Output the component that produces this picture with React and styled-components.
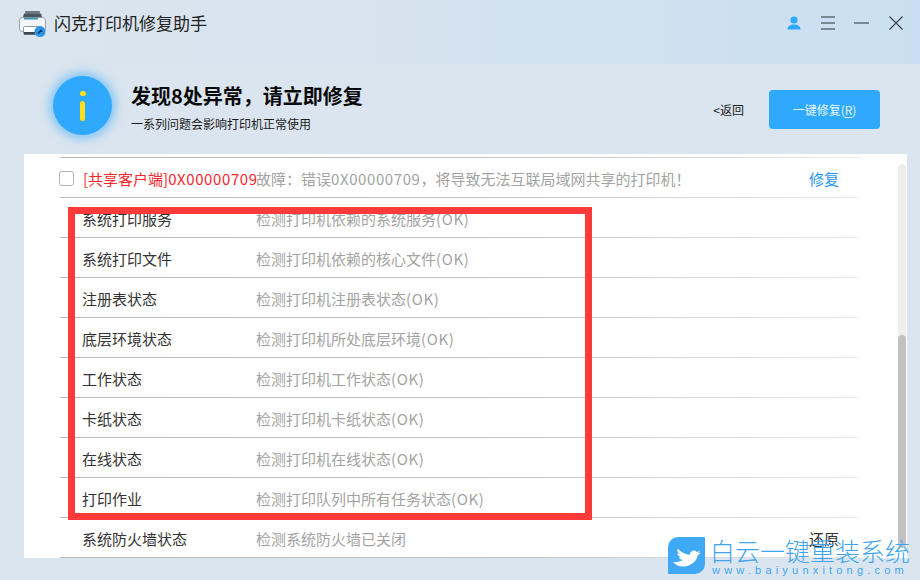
import React from 'react';
import styled, { createGlobalStyle } from 'styled-components';

const CJK = `"Noto Sans CJK SC", "Liberation Sans", sans-serif`;

const GlobalStyle = createGlobalStyle`
    html, body {
        margin: 0;
        padding: 0;
        background: #dbe5ef;
    }
    * {
        box-sizing: border-box;
    }
`;

const Window = styled.div`
    position: relative;
    width: 920px;
    height: 580px;
    overflow: hidden;
    background: #dbe5ef;
    font-family: ${CJK};
    display: flex;
    flex-direction: column;
`;

const TitleBar = styled.div`
    height: 64px;
    flex: none;
    display: flex;
    align-items: flex-start;
    padding: 10px 7px 0 19px;
    background: linear-gradient(90deg, #dbe5ef 0%, #d6e3ef 45%, #c9dff1 100%);
`;

const AppTitle = styled.span`
    margin-left: 8px;
    font-size: 17px;
    line-height: 26px;
    color: #222;
`;

const Controls = styled.div`
    margin-left: auto;
    display: flex;
`;

const ControlButton = styled.div`
    width: 34px;
    height: 26px;
    display: flex;
    align-items: center;
    justify-content: center;
`;

const Summary = styled.div`
    height: 90px;
    flex: none;
    display: flex;
    align-items: center;
    padding: 0 40px 8px 53px;
`;

const InfoBadge = styled.div`
    width: 59px;
    height: 59px;
    flex: none;
    border-radius: 50%;
    background: #2fa9fd;
    box-shadow: 0 0 10px 4px rgba(47, 169, 253, 0.5);
    display: flex;
    flex-direction: column;
    align-items: center;
    padding-top: 15px;
`;

const BadgeDot = styled.span`
    width: 6px;
    height: 5px;
    border-radius: 3px;
    background: #ffdf17;
`;

const BadgeStem = styled.span`
    width: 5px;
    height: 20px;
    margin-top: 5px;
    border-radius: 3px;
    background: #ffdf17;
`;

const SummaryText = styled.div`
    margin-left: 19px;
    margin-top: 5px;
    display: flex;
    flex-direction: column;
`;

const Heading = styled.div`
    font-size: 20px;
    line-height: 28px;
    font-weight: 700;
    color: #0a0a0a;
`;

const SubHeading = styled.div`
    margin-top: 5px;
    font-size: 12px;
    line-height: 18px;
    color: #1a1a1a;
`;

const BackLink = styled.span`
    margin-left: auto;
    margin-top: 8px;
    font-size: 12px;
    color: #1a1a1a;
`;

const RepairAllButton = styled.div`
    width: 111px;
    height: 39px;
    margin-left: 25px;
    margin-top: 9px;
    border-radius: 4px;
    background: #2fa9fd;
    color: #e8f5ff;
    font-size: 12px;
    display: flex;
    align-items: center;
    justify-content: center;
    u {
        text-underline-offset: 2px;
    }
`;

const Panel = styled.div`
    width: 883px;
    height: 404px;
    margin-left: 24px;
    flex: none;
    background: #fff;
    display: flex;
    padding-left: 36px;
    overflow: hidden;
`;

const List = styled.div`
    width: 800px;
    flex: none;
    padding-top: 3px;
`;

const divider = `linear-gradient(90deg, #b8b8b8 0%, #c4c4c4 60%, #ececec 100%)`;

const Row = styled.div`
    height: ${(p) => (p.$first ? '41px' : '40px')};
    padding-top: ${(p) => (p.$first ? '1px' : '0')};
    display: flex;
    align-items: center;
    padding-left: ${(p) => (p.$issue ? '0' : '22px')};
    padding-right: 21px;
    font-size: 15px;
    position: relative;
    background: ${(p) => (p.$first ? `${divider} top / 100% 1px no-repeat` : 'none')};
    &::after {
        content: '';
        position: absolute;
        left: 0;
        right: 0;
        bottom: 0;
        height: 1px;
        background: ${divider};
    }
`;

const CheckBox = styled.span`
    width: 15px;
    height: 15px;
    flex: none;
    margin-left: -1px;
    margin-right: 9px;
    border: 1px solid #b4b4b4;
    border-radius: 3px;
    background: #fff;
`;

const Label = styled.span`
    width: 174px;
    flex: none;
    color: #333;
    white-space: nowrap;
`;

const IssueLabel = styled.span`
    width: 173px;
    flex: none;
    color: #f6262c;
    white-space: nowrap;
`;

const Description = styled.span`
    color: #a3a3a3;
    white-space: nowrap;
`;

// latin runs are a little wider in the original font
const Latin = styled.span`
    letter-spacing: 0.6px;
`;

const RowAction = styled.span`
    margin-left: auto;
    color: ${(p) => (p.$primary ? '#1f95f5' : '#333')};
`;

const ScrollTrack = styled.div`
    width: 8px;
    height: 384px;
    margin: 10px 0 0 38px;
    flex: none;
    border-radius: 4px;
    background: #eeeeee;
    display: flex;
    flex-direction: column;
    justify-content: flex-end;
`;

const ScrollThumb = styled.div`
    height: 213px;
    border-radius: 4px;
    background: #c2c2c2;
`;

// red box drawn over the screenshot
const Highlight = styled.div`
    position: absolute;
    left: 68px;
    top: 207px;
    width: 524px;
    height: 313px;
    border: 7px solid #fc3a3a;
    pointer-events: none;
`;

const Watermark = styled.div`
    position: absolute;
    left: 668px;
    top: 537px;
    display: flex;
    align-items: flex-start;
`;

const WatermarkLogo = styled.div`
    width: 37px;
    height: 37px;
    border-radius: 10px 1px 10px 1px;
    background: #3fa9f5;
    display: flex;
    align-items: center;
    justify-content: center;
    padding-top: 3px;
`;

const WatermarkText = styled.div`
    margin-left: 5px;
    display: flex;
    flex-direction: column;
    color: #3fa5ef;
`;

const WatermarkName = styled.span`
    font-size: 25px;
    line-height: 27px;
    font-weight: 300;
    white-space: nowrap;
`;

const WatermarkUrl = styled.span`
    margin-left: 2px;
    font-family: "Liberation Sans", sans-serif;
    font-size: 11px;
    line-height: 12px;
    letter-spacing: 4.2px;
    white-space: nowrap;
`;

const PrinterIcon = () => (
    <svg width="27" height="27" viewBox="0 0 27 27">
        <path d="M5 3.500h17l1.500 5h-20z" fill="#4b5560" />
        <rect x="6" y="1" width="15" height="3" rx="1" fill="#6d7780" />
        <rect x="0.500" y="7.500" width="26" height="14" rx="3" fill="#f4f6f8" stroke="#98a2ac" />
        <rect x="5" y="7.500" width="14" height="2" fill="#3f8fb0" />
        <rect x="4.500" y="16.500" width="18" height="8" rx="1" fill="#fff" stroke="#8d97a1" />
        <rect x="5" y="22" width="15" height="2.500" fill="#3c4650" />
        <circle cx="21" cy="21.500" r="5.500" fill="#2b95ea" />
        <path d="M19 23.500l3.500-3.500M22.500 19.500v2.500" stroke="#12375a" strokeWidth="1.600" fill="none" />
    </svg>
);

const UserIcon = () => (
    <svg width="14" height="14" viewBox="0 0 14 14">
        <circle cx="7" cy="4" r="3.600" fill="#2fa9fd" />
        <path d="M0.500 13.500c0-3.400 2.600-5 6.500-5s6.500 1.600 6.500 5z" fill="#2fa9fd" />
    </svg>
);

const MenuIcon = () => (
    <svg width="14" height="14" viewBox="0 0 14 14">
        <path d="M0 1h14M0 7h14M0 13h14" stroke="#2b2f33" strokeWidth="1" />
    </svg>
);

const MinimizeIcon = () => (
    <svg width="16" height="14" viewBox="0 0 16 14">
        <path d="M0 7h15" stroke="#2b2f33" strokeWidth="1" />
    </svg>
);

const CloseIcon = () => (
    <svg width="14" height="14" viewBox="0 0 14 14">
        <path d="M0.500 0.500l13 13M13.500 0.500l-13 13" stroke="#3a3e42" strokeWidth="1.100" />
    </svg>
);

const BirdIcon = () => (
    <svg width="28" height="19" viewBox="0 0 28 19">
        <path
            d="M28 4.800l-3 .5 2.200-2.300-3.200.9C22.800 2.700 21.200 2.300 19.800 2.700c-2 .6-3 2.200-2.900 4.100C12.500 6.700 8 4.300 4.500 0.500c-.5 2.200.2 4 2 5.400L4.200 5.600c.5 1.900 1.800 3.100 3.900 3.600l-2.300.2c1 1.500 2.400 2.300 4.300 2.400C7.800 13.500 4.400 14.600 0 14.300c3.200 3 7.200 4.700 11.800 4.200 7.200-.8 12.400-6 12.900-11.400 1.400-.3 2.500-1 3.300-2.300z"
            fill="#fff"
        />
    </svg>
);

const checks = [
    ['系统打印服务', '检测打印机依赖的系统服务'],
    ['系统打印文件', '检测打印机依赖的核心文件'],
    ['注册表状态', '检测打印机注册表状态'],
    ['底层环境状态', '检测打印机所处底层环境'],
    ['工作状态', '检测打印机工作状态'],
    ['卡纸状态', '检测打印机卡纸状态'],
    ['在线状态', '检测打印机在线状态'],
    ['打印作业', '检测打印队列中所有任务状态'],
];

const App = () => {
    return (
        <Window>
            <GlobalStyle />
            <TitleBar>
                <PrinterIcon />
                <AppTitle>闪克打印机修复助手</AppTitle>
                <Controls>
                    <ControlButton><UserIcon /></ControlButton>
                    <ControlButton><MenuIcon /></ControlButton>
                    <ControlButton><MinimizeIcon /></ControlButton>
                    <ControlButton><CloseIcon /></ControlButton>
                </Controls>
            </TitleBar>

            <Summary>
                <InfoBadge>
                    <BadgeDot />
                    <BadgeStem />
                </InfoBadge>
                <SummaryText>
                    <Heading>发现8处异常，请立即修复</Heading>
                    <SubHeading>一系列问题会影响打印机正常使用</SubHeading>
                </SummaryText>
                <BackLink>&lt;返回</BackLink>
                <RepairAllButton>一键修复(<u>R</u>)</RepairAllButton>
            </Summary>

            <Panel>
                <List>
                    <Row $issue $first>
                        <CheckBox />
                        <IssueLabel>[共享客户端]<Latin>0X00000709</Latin></IssueLabel>
                        <Description>故障：错误<Latin>0X00000709</Latin>，将导致无法互联局域网共享的打印机！</Description>
                        <RowAction $primary>修复</RowAction>
                    </Row>
                    {checks.map(([label, text]) => (
                        <Row key={label}>
                            <Label>{label}</Label>
                            <Description>{text}<Latin>(OK)</Latin></Description>
                        </Row>
                    ))}
                    <Row>
                        <Label>系统防火墙状态</Label>
                        <Description>检测系统防火墙已关闭</Description>
                        <RowAction>还原</RowAction>
                    </Row>
                </List>
                <ScrollTrack>
                    <ScrollThumb />
                </ScrollTrack>
            </Panel>

            <Highlight />

            <Watermark>
                <WatermarkLogo><BirdIcon /></WatermarkLogo>
                <WatermarkText>
                    <WatermarkName>白云一键重装系统</WatermarkName>
                    <WatermarkUrl>www.baiyunxitong.com</WatermarkUrl>
                </WatermarkText>
            </Watermark>
        </Window>
    );
};

export default App;
